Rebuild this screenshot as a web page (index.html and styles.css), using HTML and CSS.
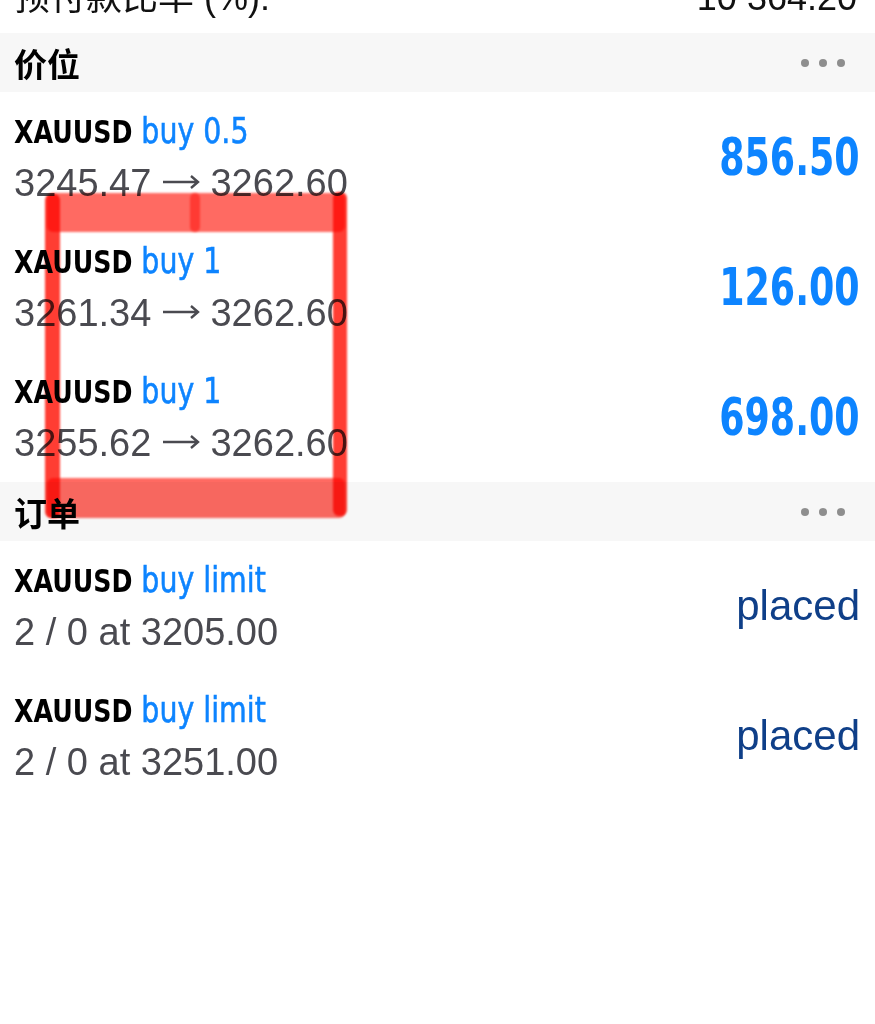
FILE: index.html
```html
<!DOCTYPE html>
<html lang="zh-CN">
<head>
    <meta charset="UTF-8">
    <meta name="viewport" content="width=device-width, initial-scale=1.0">
    <title>交易</title>
    <link rel="stylesheet" href="styles.css">
</head>
<body>
    <div class="summary">
        <span class="summary-label">预付款比率 (%):</span>
        <span class="summary-value">10 364.20</span>
    </div>

    <div class="section-head">
        <span class="section-title">价位</span>
        <span class="more"><i></i><i></i><i></i></span>
    </div>
    <div class="row">
        <div class="info">
            <div class="symbol">XAUUSD <span class="side">buy 0.5</span></div>
            <div class="detail">3245.47 <svg class="arrow" viewBox="0 0 38 20"><path d="M1 10H36M29 4L36 10L29 16"/></svg> 3262.60</div>
        </div>
        <div class="profit">856.50</div>
    </div>
    <div class="row">
        <div class="info">
            <div class="symbol">XAUUSD <span class="side">buy 1</span></div>
            <div class="detail">3261.34 <svg class="arrow" viewBox="0 0 38 20"><path d="M1 10H36M29 4L36 10L29 16"/></svg> 3262.60</div>
        </div>
        <div class="profit">126.00</div>
    </div>
    <div class="row">
        <div class="info">
            <div class="symbol">XAUUSD <span class="side">buy 1</span></div>
            <div class="detail">3255.62 <svg class="arrow" viewBox="0 0 38 20"><path d="M1 10H36M29 4L36 10L29 16"/></svg> 3262.60</div>
        </div>
        <div class="profit">698.00</div>
    </div>

    <div class="section-head">
        <span class="section-title">订单</span>
        <span class="more"><i></i><i></i><i></i></span>
    </div>
    <div class="row">
        <div class="info">
            <div class="symbol">XAUUSD <span class="side">buy limit</span></div>
            <div class="detail">2 / 0 at 3205.00</div>
        </div>
        <div class="status">placed</div>
    </div>
    <div class="row">
        <div class="info">
            <div class="symbol">XAUUSD <span class="side">buy limit</span></div>
            <div class="detail">2 / 0 at 3251.00</div>
        </div>
        <div class="status">placed</div>
    </div>

    <!-- hand drawn marker over the positions -->
    <div class="marker">
        <div class="stroke top"></div>
        <div class="stroke bottom"></div>
        <div class="stroke left"></div>
        <div class="stroke right"></div>
        <div class="stroke seam"></div>
    </div>
</body>
</html>
```

FILE: styles.css
```css
body {
    margin: 0;
    background: #fff;
    font-family: 'Liberation Sans', Arial, 'Noto Sans CJK SC', sans-serif;
    color: #111;
    position: relative;
    height: 1024px;
    overflow: hidden;
}
.summary {
    height: 33px;
    overflow: hidden;
    display: flex;
    justify-content: space-between;
    align-items: flex-end;
    padding: 0 18px 17px 14px;
    box-sizing: border-box;
    font-size: 36px;
    line-height: 36px;
}
.section-head {
    height: 59px;
    background: #f7f7f7;
    display: flex;
    justify-content: space-between;
    align-items: center;
    padding: 0 30px 0 14px;
}
.section-title {
    font-family: 'Noto Sans CJK SC', sans-serif;
    font-size: 33px;
    font-weight: 700;
    color: #000;
}
.more {
    display: flex;
    gap: 10px;
}
.more i {
    width: 8px;
    height: 8px;
    border-radius: 50%;
    background: #8e8e8e;
}
.row {
    height: 130px;
    display: flex;
    justify-content: space-between;
    align-items: center;
    padding: 0 15px 0 14px;
}
.info {
    align-self: flex-start;
    padding-top: 15px;
}
/* condensed face is not installed, so squeeze the DejaVu glyphs */
.symbol {
    font-family: 'DejaVu Sans', sans-serif;
    font-weight: 700;
    font-size: 32px;
    line-height: 48px;
    color: #000;
    white-space: nowrap;
    transform: scaleX(0.79);
    transform-origin: left center;
}
.side {
    font-weight: 400;
    font-size: 36px;
    color: #0d84ff;
    -webkit-text-stroke: 0.6px #0d84ff;
}
.detail {
    font-size: 38px;
    line-height: 55px;
    color: #4a4a50;
}
.arrow {
    width: 38px;
    height: 20px;
    vertical-align: 4px;
    fill: none;
    stroke: #4a4a50;
    stroke-width: 2.4;
}
.profit {
    font-family: 'DejaVu Sans', sans-serif;
    font-weight: 700;
    font-size: 52px;
    line-height: 52px;
    color: #0d84ff;
    transform: scaleX(0.7);
    transform-origin: right center;
}
.status {
    font-size: 42px;
    line-height: 42px;
    color: #0f3f88;
}
.marker {
    position: absolute;
    left: 0;
    top: 0;
    width: 100%;
    height: 100%;
    pointer-events: none;
}
.stroke {
    position: absolute;
    mix-blend-mode: multiply;
    filter: blur(1.2px);
    border-radius: 6px;
}
.top {
    left: 47px;
    top: 193px;
    width: 298px;
    height: 39px;
    background: #ff6a62;
}
.bottom {
    left: 47px;
    top: 478px;
    width: 298px;
    height: 40px;
    background: #ff6a62;
}
.left {
    left: 45px;
    top: 194px;
    width: 15px;
    height: 324px;
    background: #ff3d33;
}
.right {
    left: 333px;
    top: 192px;
    width: 14px;
    height: 324px;
    background: #ff3d33;
}
.seam {
    left: 190px;
    top: 193px;
    width: 10px;
    height: 39px;
    background: #ff8a84;
}
```
